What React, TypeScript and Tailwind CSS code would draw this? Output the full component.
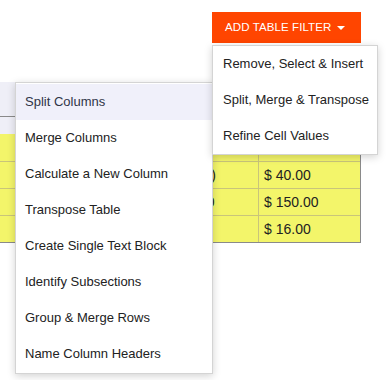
import React from 'react'

const subItems = [
    'Split Columns',
    'Merge Columns',
    'Calculate a New Column',
    'Transpose Table',
    'Create Single Text Block',
    'Identify Subsections',
    'Group & Merge Rows',
    'Name Column Headers',
]

const filterItems = ['Remove, Select & Insert', 'Split, Merge & Transpose', 'Refine Cell Values']

const rows = [
    ['', '$ 8.00', '$ 24.00'],
    ['', '$ (12.50)', '$ 40.00'],
    ['', '$ 120.00', '$ 150.00'],
    ['', '', '$ 16.00'],
]

export default function App() {
    return (
        <div className="relative h-[380px] w-[391px] overflow-hidden bg-white font-['Liberation_Sans',Arial,sans-serif] text-[#222]">
            <div className="pl-[212px] pt-[12px]">
                <button className="flex h-[31px] w-[149px] items-center gap-[6px] whitespace-nowrap bg-[#ff4500] pl-[13px] text-[11.5px] uppercase tracking-[0.1px] text-white">
                    <span>Add Table Filter</span>
                    <span className="h-0 w-0 border-x-[4px] border-t-[4px] border-x-transparent border-t-white" />
                </button>
            </div>

            {/* table behind the menus */}
            <div className="mt-[39px] w-[361px] border-r border-b border-[#8a8a8a]">
                <div className="h-[35px] border-b border-[#8a8a8a] bg-[#efeff7]" />
                <div className="h-[17px] bg-[#efeff7]" />
                {rows.map((r, i) => (
                    <div key={i} className={`grid h-[27px] grid-cols-[155px_103px_1fr] bg-[#f3f56a] text-[14px] ${i > 0 ? 'border-t border-[#c9c57a]' : ''}`}>
                        <div className="flex items-center px-[5px]">{r[0]}</div>
                        <div className="flex items-center whitespace-nowrap px-[5px]">{r[1]}</div>
                        <div className="flex items-center border-l border-[#c9c57a] px-[5px]">{r[2]}</div>
                    </div>
                ))}
            </div>

            {/* submenu */}
            <div className="absolute left-[15px] top-[82px] z-10 w-[198px] border border-[#d4d4d4] bg-white py-[1px] shadow-[0_2px_8px_rgba(0,0,0,0.18)]">
                {subItems.map((s, i) => (
                    <div key={s} className={`flex h-[36px] items-center whitespace-nowrap px-[9px] text-[13px] ${i === 0 ? 'bg-[#f0f0fa] text-[#2f3447]' : ''}`}>
                        {s}
                    </div>
                ))}
            </div>

            {/* filter menu */}
            <div className="absolute left-[212px] top-[45px] z-20 w-[166px] border border-[#d4d4d4] bg-white shadow-[0_2px_8px_rgba(0,0,0,0.18)]">
                {filterItems.map(s => (
                    <div key={s} className="flex h-[36px] items-center whitespace-nowrap px-[10px] text-[13px]">
                        {s}
                    </div>
                ))}
            </div>
        </div>
    )
}
